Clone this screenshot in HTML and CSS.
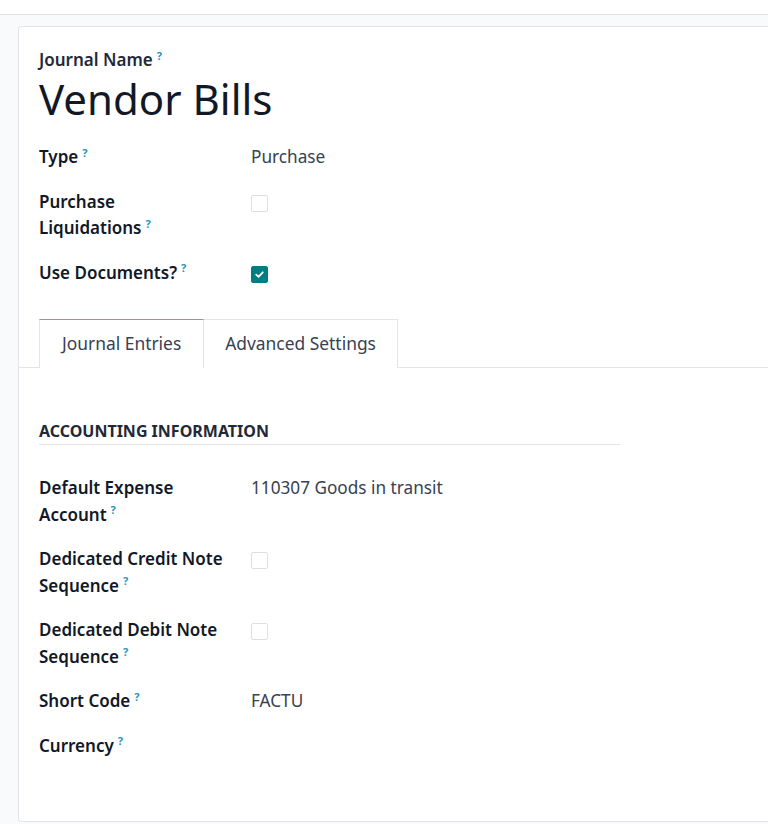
FILE: index.html
```html
<!DOCTYPE html>
<html>
<head>
<meta charset="utf-8">
<link rel="stylesheet" href="styles.css">
</head>
<body>
<div class="topbar"></div>
<div class="page">
  <div class="card">
    <div class="title-block">
      <div class="title-label">Journal Name<sup class="q">?</sup></div>
      <h1 class="title">Vendor Bills</h1>
    </div>
    <div class="fields">
      <div class="label">Type<sup class="q">?</sup></div>
      <div class="value">Purchase</div>

      <div class="label">Purchase <span class="nw">Liquidations<sup class="q">?</sup></span></div>
      <div class="value"><span class="check"></span></div>

      <div class="label">Use Documents?<sup class="q">?</sup></div>
      <div class="value"><span class="check checked"><svg viewBox="0 0 16 16" width="11" height="11"><path d="M3.2 8.3 L6.5 11.3 L12.8 4.8" fill="none" stroke="#fff" stroke-width="2.6" stroke-linecap="round" stroke-linejoin="round"/></svg></span></div>
    </div>

    <div class="tabs">
      <div class="tab active">Journal Entries</div>
      <div class="tab">Advanced Settings</div>
    </div>

    <div class="group">
      <div class="group-title">ACCOUNTING INFORMATION</div>
      <div class="fields">
        <div class="label"><span class="ln">Default Expense</span> <span class="nw">Account<sup class="q">?</sup></span></div>
        <div class="value">110307 Goods in transit</div>

        <div class="label"><span class="ln">Dedicated Credit Note</span> <span class="nw">Sequence<sup class="q">?</sup></span></div>
        <div class="value"><span class="check"></span></div>

        <div class="label"><span class="ln">Dedicated Debit Note</span> <span class="nw">Sequence<sup class="q">?</sup></span></div>
        <div class="value"><span class="check"></span></div>

        <div class="label">Short Code<sup class="q">?</sup></div>
        <div class="value">FACTU</div>

        <div class="label">Currency<sup class="q">?</sup></div>
        <div class="value"></div>
      </div>
    </div>
  </div>
</div>
</body>
</html>
```

FILE: styles.css
```css
* { box-sizing: border-box; }
html, body {
  margin: 0;
  padding: 0;
  height: 100%;
}
body {
  font-family: "Noto Sans", "Open Sans", sans-serif;
  color: #111827;
  background: #f9fafb;
  overflow: hidden;
}
.topbar {
  height: 15px;
  background: #ffffff;
  border-bottom: 1px solid #e2e4e8;
}
.page {
  padding: 11px 0 0 18px;
}
.card {
  width: 800px;
  height: 796px;
  background: #ffffff;
  border: 1px solid #e2e4e8;
  border-right: none;
  border-radius: 4px 0 0 4px;
  padding: 20px 0 0 20px;
}
.title-label {
  font-size: 17px;
  font-weight: 600;
  line-height: 26px;
  color: #1f2937;
}
.q {
  color: #2596be;
  font-size: 11px;
  font-weight: 700;
  line-height: 0;
  margin-left: 4px;
  vertical-align: 0.55em;
}
.title {
  margin: 0;
  font-size: 42px;
  font-weight: 400;
  line-height: 52px;
  color: #111827;
}
.fields {
  display: grid;
  grid-template-columns: 212px 1fr;
  row-gap: 18px;
  margin-top: 19px;
  width: 581px;
}
.label {
  font-size: 17px;
  font-weight: 600;
  line-height: 26.5px;
  color: #111827;
  padding-right: 24px;
}
.nw {
  white-space: nowrap;
}
.value {
  font-size: 17.2px;
  line-height: 26.5px;
  color: #374151;
}
.check {
  display: inline-flex;
  align-items: center;
  justify-content: center;
  width: 17px;
  height: 17px;
  margin-top: 6px;
  border: 1px solid #dcdfe3;
  border-radius: 2px;
  background: #fff;
  vertical-align: top;
}
.check.checked {
  background: #017e84;
  border-color: #017e84;
}
.tabs {
  display: flex;
  margin: 33px 0 0 -21px;
  padding-left: 21px;
  border-bottom: 1px solid #e2e4e8;
}
.tab {
  height: 49px;
  padding: 0 21px;
  font-size: 17.4px;
  line-height: 47px;
  color: #374151;
  border: 1px solid #e2e4e8;
  border-bottom: none;
  background: #fff;
  margin-bottom: -1px;
}
.tab.active {
  border-top: 1px solid #a58ea0;
  padding: 0 22px;
}
.tab + .tab {
  border-left: none;
}
.group {
  padding-top: 52px;
}
.group-title {
  width: 581px;
  font-size: 16px;
  font-weight: 700;
  line-height: 22px;
  color: #1f2937;
  padding-bottom: 2px;
  border-bottom: 1px solid #e2e4e8;
}
.group .fields {
  margin-top: 30px;
}
```
